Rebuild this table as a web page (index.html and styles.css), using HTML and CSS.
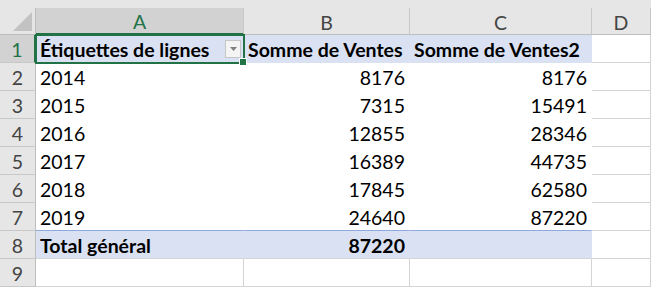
FILE: index.html
```html
<!DOCTYPE html>
<html lang="fr">
<head>
  <meta charset="UTF-8" />
  <title>Tableau croisé - Ventes</title>
  <link rel="stylesheet" href="styles.css">
</head>
<body>
  <div class="topbar"></div>
  <div class="sheet">
    <!-- en-têtes de colonnes -->
    <div class="corner"><span class="tri"></span></div>
    <div class="colhead sel">A</div>
    <div class="colhead">B</div>
    <div class="colhead">C</div>
    <div class="colhead">D</div>

    <!-- ligne 1 : en-tête du tableau croisé -->
    <div class="rowhead sel">1</div>
    <div class="cell pv-head active">
      <span>Étiquettes de lignes</span>
      <span class="dropdown"><svg width="7" height="4" viewBox="0 0 7 4"><path d="M0 0h7L3.5 4z" fill="#7f7f7f"/></svg></span>
      <span class="handle"></span>
    </div>
    <div class="cell pv-head">Somme de Ventes</div>
    <div class="cell pv-head">Somme de Ventes2</div>
    <div class="cell"></div>

    <div class="rowhead">2</div>
    <div class="cell pv">2014</div>
    <div class="cell pv num">8176</div>
    <div class="cell pv num">8176</div>
    <div class="cell"></div>

    <div class="rowhead">3</div>
    <div class="cell pv">2015</div>
    <div class="cell pv num">7315</div>
    <div class="cell pv num">15491</div>
    <div class="cell"></div>

    <div class="rowhead">4</div>
    <div class="cell pv">2016</div>
    <div class="cell pv num">12855</div>
    <div class="cell pv num">28346</div>
    <div class="cell"></div>

    <div class="rowhead">5</div>
    <div class="cell pv">2017</div>
    <div class="cell pv num">16389</div>
    <div class="cell pv num">44735</div>
    <div class="cell"></div>

    <div class="rowhead">6</div>
    <div class="cell pv">2018</div>
    <div class="cell pv num">17845</div>
    <div class="cell pv num">62580</div>
    <div class="cell"></div>

    <div class="rowhead">7</div>
    <div class="cell pv">2019</div>
    <div class="cell pv num">24640</div>
    <div class="cell pv num">87220</div>
    <div class="cell"></div>

    <!-- ligne 8 : total -->
    <div class="rowhead">8</div>
    <div class="cell pv-total">Total général</div>
    <div class="cell pv-total num">87220</div>
    <div class="cell pv-total"></div>
    <div class="cell"></div>

    <div class="rowhead">9</div>
    <div class="cell"></div>
    <div class="cell"></div>
    <div class="cell"></div>
    <div class="cell"></div>
  </div>
</body>
</html>
```

FILE: styles.css
```css
body {
  margin: 0;
  background-color: white;
  font-family: Lato, "Open Sans", sans-serif;
  font-size: 19.5px;
  color: #000;
  width: 651px;
  height: 287px;
  overflow: hidden;
}

.topbar {
  height: 8px;
  background-color: #e6e6e6;
}

.sheet {
  display: grid;
  grid-template-columns: 36px 208px 166px 182px 59px;
  grid-template-rows: 27px;
  grid-auto-rows: 28px;
}

.sheet > div {
  box-sizing: border-box;
}

.corner {
  position: relative;
  background-color: #e6e6e6;
  border-right: 1px solid #bdbdbd;
  border-bottom: 1px solid #bdbdbd;
}

.corner .tri {
  position: absolute;
  right: 3px;
  bottom: 3px;
  width: 0;
  height: 0;
  border-left: 19px solid transparent;
  border-bottom: 19px solid #c2c2c2;
}

.colhead {
  display: flex;
  align-items: center;
  justify-content: center;
  padding-top: 2px;
  background-color: #e6e6e6;
  color: #444;
  border-right: 1px solid #c8c8c8;
  border-bottom: 1px solid #bdbdbd;
}

.rowhead {
  display: flex;
  align-items: center;
  justify-content: center;
  padding-top: 2px;
  background-color: #e6e6e6;
  color: #444;
  border-right: 1px solid #bdbdbd;
  border-bottom: 1px solid #c8c8c8;
}

.colhead.sel,
.rowhead.sel {
  background-color: #d2d2d2;
  color: #217346;
}

.colhead.sel {
  border-bottom: 2px solid #217346;
}

.rowhead.sel {
  border-right: 2px solid #217346;
}

.cell {
  display: flex;
  align-items: center;
  padding: 2px 4px 0;
  white-space: nowrap;
  border-right: 1px solid #d4d4d4;
  border-bottom: 1px solid #d4d4d4;
}

.num {
  justify-content: flex-end;
}

/* tableau croisé : pas de quadrillage */
.pv {
  border-color: transparent;
}

.pv-head {
  background-color: #d9e1f2;
  font-weight: bold;
  border-right-color: #d9e1f2;
  border-bottom-color: #d9e1f2;
}

.pv-total {
  background-color: #d9e1f2;
  font-weight: bold;
  border-right-color: #d9e1f2;
  border-top: 1px solid #8ea9db;
  margin-top: -1px;
}

.active {
  position: relative;
  outline: 2px solid #217346;
  outline-offset: -1px;
}

.dropdown {
  display: flex;
  align-items: center;
  justify-content: center;
  margin-left: auto;
  margin-right: -2px;
  margin-top: -2px;
  width: 16px;
  height: 18px;
  background-color: #f4f4f4;
  border: 1px solid #c6c6c6;
  box-sizing: border-box;
}

.handle {
  position: absolute;
  right: -4px;
  bottom: -4px;
  width: 6px;
  height: 6px;
  background-color: #217346;
  border: 1px solid white;
}
```
